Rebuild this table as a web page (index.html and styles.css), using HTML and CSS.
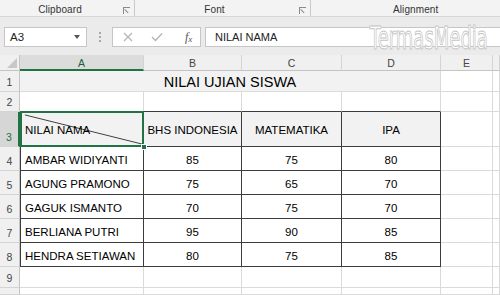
FILE: index.html
```html
<!DOCTYPE html>
<html>
<head>
<meta charset="utf-8">
<link rel="stylesheet" href="styles.css">
</head>
<body>
<div class="app">
  <div class="ribbon">
    <div class="group g-clip"><span class="glabel">Clipboard</span><span class="launch"></span></div>
    <div class="group g-font"><span class="glabel">Font</span><span class="launch"></span></div>
    <div class="group g-align"><span class="glabel">Alignment</span></div>
  </div>
  <div class="fbar">
    <div class="namebox"><span>A3</span><span class="caret"></span></div>
    <div class="grip"><i></i><i></i><i></i></div>
    <div class="fnbox">
      <svg class="ic" width="10" height="10" viewBox="0 0 10 10"><path d="M1 1L9 9M9 1L1 9" stroke="#b4b4b4" stroke-width="1.2" fill="none"/></svg>
      <svg class="ic" width="12" height="10" viewBox="0 0 12 10"><path d="M1 5L4.5 8.5L11 1.5" stroke="#b4b4b4" stroke-width="1.3" fill="none"/></svg>
      <span class="fx"><i>f</i><sub>x</sub></span>
    </div>
    <div class="finput">NILAI NAMA</div>
    <div class="watermark">TermasMedia</div>
  </div>
  <div class="sheet">
    <div class="ch corner"><span class="tri"></span></div>
    <div class="ch sel">A</div>
    <div class="ch">B</div>
    <div class="ch">C</div>
    <div class="ch">D</div>
    <div class="ch">E</div>
    <div class="ch"></div>

    <div class="rh">1</div>
    <div class="c title">NILAI UJIAN SISWA</div>
    <div class="c"></div>
    <div class="c"></div>

    <div class="rh">2</div>
    <div class="c tb"></div>
    <div class="c tb"></div>
    <div class="c tb"></div>
    <div class="c tb"></div>
    <div class="c"></div>
    <div class="c"></div>

    <div class="rh rsel">3</div>
    <div class="c t tl hd a3"><svg class="diag" viewBox="0 0 124 35" preserveAspectRatio="none"><line x1="4" y1="3" x2="123" y2="33" stroke="#3c3c3c" stroke-width="1"/></svg><span class="txt">NILAI NAMA</span><span class="handle"></span></div>
    <div class="c t hd ctr">BHS INDONESIA</div>
    <div class="c t hd ctr">MATEMATIKA</div>
    <div class="c t hd ctr">IPA</div>
    <div class="c"></div>
    <div class="c"></div>

    <div class="rh">4</div>
    <div class="c t tl">AMBAR WIDIYANTI</div>
    <div class="c t ctr">85</div>
    <div class="c t ctr">75</div>
    <div class="c t ctr">80</div>
    <div class="c"></div>
    <div class="c"></div>

    <div class="rh">5</div>
    <div class="c t tl">AGUNG PRAMONO</div>
    <div class="c t ctr">75</div>
    <div class="c t ctr">65</div>
    <div class="c t ctr">70</div>
    <div class="c"></div>
    <div class="c"></div>

    <div class="rh">6</div>
    <div class="c t tl">GAGUK ISMANTO</div>
    <div class="c t ctr">70</div>
    <div class="c t ctr">75</div>
    <div class="c t ctr">70</div>
    <div class="c"></div>
    <div class="c"></div>

    <div class="rh">7</div>
    <div class="c t tl">BERLIANA PUTRI</div>
    <div class="c t ctr">95</div>
    <div class="c t ctr">90</div>
    <div class="c t ctr">85</div>
    <div class="c"></div>
    <div class="c"></div>

    <div class="rh">8</div>
    <div class="c t tl">HENDRA SETIAWAN</div>
    <div class="c t ctr">80</div>
    <div class="c t ctr">75</div>
    <div class="c t ctr">85</div>
    <div class="c"></div>
    <div class="c"></div>

    <div class="rh">9</div>
    <div class="c"></div>
    <div class="c"></div>
    <div class="c"></div>
    <div class="c"></div>
    <div class="c"></div>
    <div class="c"></div>

    <div class="rh"></div>
    <div class="c"></div>
    <div class="c"></div>
    <div class="c"></div>
    <div class="c"></div>
    <div class="c"></div>
    <div class="c"></div>
  </div>
</div>
</body>
</html>
```
FILE: styles.css
```css
* { box-sizing: border-box; }
html, body { margin: 0; padding: 0; }
body {
  width: 500px;
  height: 295px;
  overflow: hidden;
  background: #ffffff;
  font-family: "Liberation Sans", Arial, sans-serif;
}
.app { width: 500px; height: 295px; display: flex; flex-direction: column; }

/* ribbon */
.ribbon {
  height: 17px;
  background: #f3f3f3;
  border-bottom: 1px solid #d6d6d6;
  display: flex;
  flex-shrink: 0;
}
.group {
  position: relative;
  display: flex;
  align-items: center;
  justify-content: center;
  border-right: 1px solid #c9c9c9;
  height: 16px;
}
.g-clip { width: 135px; padding-right: 14px; }
.g-font { width: 176px; padding-right: 16px; }
.g-align { flex: 1; border-right: none; justify-content: flex-start; }
.g-align .glabel { margin-left: 82px; }
.glabel { font-size: 10px; color: #333333; padding-top: 3px; letter-spacing: 0.1px; }
.launch {
  position: absolute;
  right: 4px;
  top: 7px;
  width: 7px;
  height: 7px;
  border-top: 1px solid #8a8a8a;
  border-left: 1px solid #8a8a8a;
}
.launch::after {
  content: "";
  position: absolute;
  left: 1px;
  top: 1px;
  width: 5px;
  height: 1px;
  background: #8a8a8a;
  transform-origin: 0 0;
  transform: rotate(45deg);
}

/* formula bar */
.fbar {
  position: relative;
  height: 38px;
  flex-shrink: 0;
  background: #ebebeb;
  display: flex;
  align-items: flex-start;
  padding-top: 10px;
  padding-left: 4px;
}
.namebox {
  width: 83px;
  height: 20px;
  background: #ffffff;
  border: 1px solid #c6c6c6;
  display: flex;
  align-items: center;
  justify-content: space-between;
  padding: 0 6px 0 5px;
  font-size: 11.5px;
  color: #222222;
}
.caret {
  width: 0; height: 0;
  border-left: 3.5px solid transparent;
  border-right: 3.5px solid transparent;
  border-top: 4px solid #555555;
}
.grip {
  width: 25px;
  height: 20px;
  display: flex;
  flex-direction: column;
  align-items: center;
  justify-content: center;
  gap: 2px;
}
.grip i { display: block; width: 2px; height: 2px; background: #a8a8a8; }
.fnbox {
  width: 89px;
  height: 20px;
  background: #ffffff;
  border: 1px solid #c6c6c6;
  display: flex;
  align-items: center;
  padding-left: 10px;
  gap: 18px;
}
.fx { font-family: "Liberation Serif", serif; font-size: 12px; color: #555555; margin-left: 4px; }
.fx i { font-style: italic; }
.fx sub { font-size: 9px; font-style: italic; vertical-align: -1px; }
.finput {
  margin-left: 4px;
  flex: 1;
  height: 20px;
  background: #ffffff;
  border: 1px solid #c6c6c6;
  border-right: none;
  font-size: 11px;
  color: #222222;
  padding-left: 9px;
  display: flex;
  align-items: center;
}
.watermark {
  position: absolute;
  right: 12px;
  top: 9px;
  height: 24px;
  line-height: 24px;
  font-family: "DejaVu Sans", sans-serif;
  font-size: 30px;
  color: #ffffff;
  -webkit-text-stroke: 1px #c4c4c4;
  transform: scale(0.6, 1.04);
  transform-origin: right top;
  white-space: nowrap;
}

/* sheet */
.sheet {
  flex: 1;
  display: grid;
  grid-template-columns: 20px 124px 98px 100px 99px 52px 1fr;
  grid-template-rows: 16px 21px 20px 35px 24px 24px 24px 24px 24px 21px 1fr;
  background: #ffffff;
  font-size: 11.5px;
  color: #000000;
}
.ch {
  background: #f0f0f0;
  border-right: 1px solid #d4d4d4;
  border-bottom: 1px solid #c4c4c4;
  display: flex;
  align-items: center;
  justify-content: center;
  font-size: 10.5px;
  line-height: 12px;
  color: #444444;
  padding-top: 1px;
}
.ch.sel {
  background: #dcdcdc;
  border-bottom: 2px solid #217346;
  color: #1e5e3a;
  padding-top: 2px;
}
.corner { position: relative; border-right: 1px solid #c4c4c4; }
.tri {
  position: absolute;
  right: 2px;
  bottom: 2px;
  width: 0; height: 0;
  border-left: 10px solid transparent;
  border-bottom: 10px solid #c8c8c8;
}
.rh {
  background: #f0f0f0;
  border-right: 1px solid #c4c4c4;
  border-bottom: 1px solid #d4d4d4;
  display: flex;
  align-items: flex-end;
  justify-content: center;
  font-size: 10.5px;
  color: #444444;
  padding-bottom: 3px;
}
.rh.rsel { background: #d6d6d6; color: #217346; border-right: 2px solid #217346; }
.c {
  border-right: 1px solid #dadada;
  border-bottom: 1px solid #dadada;
  display: flex;
  align-items: center;
  padding: 2px 0 0 4px;
  white-space: nowrap;
}
.title {
  grid-column: span 4;
  background: #f2f2f2;
  justify-content: center;
  font-size: 14.5px;
  padding-left: 0;
}
.tb { border-bottom: 1px solid #3c3c3c; }
.t { border-right: 1px solid #3c3c3c; border-bottom: 1px solid #3c3c3c; }
.tl { border-left: 1px solid #3c3c3c; }
.hd { background: #f2f2f2; }
.ctr { justify-content: center; padding-left: 0; }
.a3 { position: relative; z-index: 2; overflow: visible; }
.a3::before {
  content: "";
  position: absolute;
  top: -1px;
  left: -1px;
  right: -1px;
  bottom: -1px;
  border: 2px solid #217346;
}
.diag { position: absolute; left: 0; top: 0; width: 100%; height: 100%; }
.txt { position: relative; }
.handle {
  position: absolute;
  right: -4px;
  bottom: -4px;
  width: 6px;
  height: 6px;
  background: #217346;
  border: 1px solid #ffffff;
}
```
